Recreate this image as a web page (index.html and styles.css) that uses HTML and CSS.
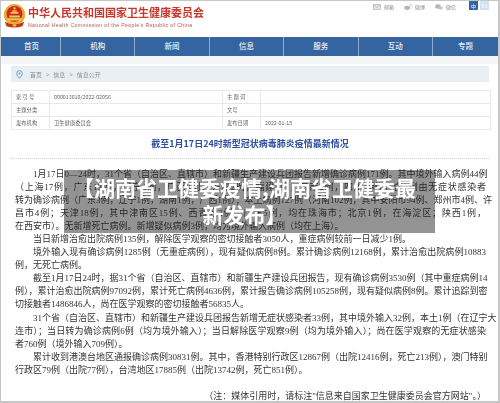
FILE: index.html
```html
<!DOCTYPE html>
<html lang="zh-CN">
<head>
  <meta charset="UTF-8" />
  <title>截至1月17日24时新型冠状病毒肺炎疫情最新情况</title>
  <link rel="stylesheet" href="styles.css">
</head>
<body>
  <div class="frame">
    <div class="page">
      <div class="masthead">
        <div class="brand">
          <svg class="emblem" viewBox="0 0 26 28" width="23" height="25">
            <circle cx="13" cy="12" r="12" fill="#e3ad32"/>
            <circle cx="13" cy="11" r="9" fill="#cf2a1c"/>
            <path d="M7 13h12v2H7zM8.500 9h9v2h-9zM10.500 7h5v1.500h-5z" fill="#f0c75a"/>
            <circle cx="13" cy="4.800" r="1.300" fill="#f6d96b"/>
            <rect x="5" y="16" width="16" height="2.500" fill="#f0c75a"/>
            <path d="M2 20q11 6 22 0l-2 5q-9 3-18 0z" fill="#c9301e"/>
            <circle cx="13" cy="24" r="2" fill="#e3ad32"/>
          </svg>
          <div>
            <div class="brand-cn">中华人民共和国国家卫生健康委员会</div>
            <div class="brand-en">National Health Commission of the People's Republic of China</div>
          </div>
        </div>
        <div class="tools">
          <span class="tool">
            <svg viewBox="0 0 8 6" width="8" height="6"><rect x="0.500" y="0.500" width="7" height="5" fill="#e6e6e6" stroke="#aaa" stroke-width="0.600"/><path d="M0.500 1l3.500 2.500L7.500 1" fill="none" stroke="#aaa" stroke-width="0.600"/></svg>
            邮箱
          </span>
          <span class="tool">
            <svg viewBox="0 0 8 6" width="8" height="6"><ellipse cx="3.200" cy="3.800" rx="3" ry="2.100" fill="#b5b5b5"/><path d="M5.500 .6q2 0 2 2" fill="none" stroke="#b5b5b5" stroke-width="0.800"/></svg>
            微博
          </span>
          <span class="tool">
            <svg viewBox="0 0 8 6" width="8" height="6"><ellipse cx="3" cy="2.500" rx="2.800" ry="2.200" fill="#b5b5b5"/><ellipse cx="5.700" cy="4" rx="2.200" ry="1.800" fill="#c8c8c8"/></svg>
            微信
          </span>
          <span class="lang lang-on">中</span>
          <span class="lang">En</span>
        </div>
      </div>

      <nav class="nav">
        <a>首页</a><a>机构</a><a>新闻</a><a>信息</a><a>服务</a><a>互动</a><a>专题</a>
      </nav>
      <div class="strip"></div>

      <div class="content">
        <div class="crumbs">
          <svg viewBox="0 0 8 10" width="7" height="9"><path d="M4 .6a3.200 3.200 0 0 1 3.200 3.200C7.200 6 4 9.400 4 9.400S.8 6 .8 3.800A3.200 3.200 0 0 1 4 .6z" fill="none" stroke="#5b93c9"/><circle cx="4" cy="3.800" r="1" fill="#5b93c9"/></svg>
          <span>首页</span><span class="sep">&gt;</span><span>信息</span><span class="sep">&gt;</span><span>信息公开</span>
        </div>

        <table class="meta">
          <tr><td class="k">索 引 号</td><td class="v1">000013610/2022-02056</td><td class="k">主 题 词</td><td></td></tr>
          <tr><td class="k">主题分类</td><td></td><td class="k">文号</td><td></td></tr>
          <tr><td class="k">发布机构</td><td>卫生健康委员会</td><td class="k">发布日期</td><td>2022-01-18</td></tr>
        </table>

        <h1 class="title">截至1月17日24时新型冠状病毒肺炎疫情最新情况</h1>

        <div class="article">
          <p>
            <span class="ln first">1月17日0—24时，31个省（自治区、直辖市）和新疆生产建设兵团报告新增确诊病例171例。其中境外输入病例44例</span>
            <span class="ln">（上海17例，广东13例，辽宁4例，广西3例，天津2例，福建2例，云南2例，四川1例），含7例由无症状感染者</span>
            <span class="ln">转为确诊病例（广东3例，辽宁1例，湖南1例，广西1例）；本土病例127例（河南102例，其中安阳市94例、郑州市4例、许</span>
            <span class="ln">昌市4例；天津18例，其中津南区15例、西青区2例；广东5例，均在珠海市；北京1例，在海淀区；陕西1例，</span>
            <span class="ln end">在西安市）。无新增死亡病例。新增疑似病例3例，均为境外输入病例（均在上海）。</span>
          </p>
          <p>
            <span class="ln first end">当日新增治愈出院病例135例，解除医学观察的密切接触者3050人，重症病例较前一日减少1例。</span>
          </p>
          <p>
            <span class="ln first">境外输入现有确诊病例1285例（无重症病例），现有疑似病例8例。累计确诊病例12168例，累计治愈出院病例10883</span>
            <span class="ln end">例，无死亡病例。</span>
          </p>
          <p>
            <span class="ln first">截至1月17日24时，据31个省（自治区、直辖市）和新疆生产建设兵团报告，现有确诊病例3530例（其中重症病例14</span>
            <span class="ln">例），累计治愈出院病例97092例，累计死亡病例4636例，累计报告确诊病例105258例，现有疑似病例8例。累计追踪到密</span>
            <span class="ln end">切接触者1486846人，尚在医学观察的密切接触者56835人。</span>
          </p>
          <p>
            <span class="ln first">31个省（自治区、直辖市）和新疆生产建设兵团报告新增无症状感染者33例，其中境外输入32例，本土1例（在辽宁大</span>
            <span class="ln">连市）；当日转为确诊病例6例（均为境外输入）；当日解除医学观察9例（均为境外输入）；尚在医学观察的无症状感染</span>
            <span class="ln end">者760例（境外输入709例）。</span>
          </p>
          <p>
            <span class="ln first">累计收到港澳台地区通报确诊病例30831例。其中，香港特别行政区12867例（出院12416例，死亡213例），澳门特别</span>
            <span class="ln end">行政区79例（出院77例），台湾地区17885例（出院13742例，死亡851例）。</span>
          </p>
          <p class="note">（注：媒体引用时，请标注"信息来自国家卫生健康委员会官方网站"。）</p>
        </div>
      </div>
    </div>
  </div>

  <div class="overlay">【湖南省卫健委疫情,湖南省卫健委最新发布】</div>
</body>
</html>
```

FILE: styles.css
```css
* {
  margin: 0;
  padding: 0;
  box-sizing: border-box;
}

body {
  width: 500px;
  height: 403px;
  overflow: hidden;
  background: #fff;
  font-family: "Liberation Serif", "Noto Sans CJK SC", serif;
  position: relative;
}

.frame {
  height: 403px;
  border: 1px solid #c6c6c6;
  border-right-width: 2px;
  border-bottom-width: 2px;
  overflow: hidden;
}

.page {
  filter: blur(0.35px);
}

.masthead {
  height: 36px;
  display: flex;
  justify-content: space-between;
  padding: 0 9px 0 2px;
}

.brand {
  display: flex;
  gap: 2px;
  padding-top: 3px;
}

.brand-cn {
  font-family: "Noto Sans CJK SC", sans-serif;
  font-weight: 700;
  font-size: 11px;
  line-height: 15px;
  color: #c8372b;
  margin-top: 1px;
}

.brand-en {
  font-family: "Liberation Sans", sans-serif;
  font-size: 5.200px;
  line-height: 8px;
  color: #b8564c;
  letter-spacing: 0.350px;
  margin-top: 1px;
  white-space: nowrap;
}

.tools {
  display: flex;
  align-items: flex-start;
  gap: 10px;
  font-family: "Noto Sans CJK SC", sans-serif;
  font-size: 5px;
  color: #888;
}

.tool {
  display: flex;
  align-items: center;
  gap: 3px;
  height: 9px;
  margin-top: 1px;
}

.lang {
  width: 9px;
  height: 9px;
  margin-left: -8px;
  background: #d5e2f0;
  color: #f2f6fa;
  text-align: center;
  line-height: 9px;
}

.lang-on {
  margin-left: 3px;
  background: #3565a0;
  color: #fff;
}

.nav {
  height: 19px;
  display: flex;
  background: #3565a0;
  padding-left: 59px;
  position: relative;
}

.nav a {
  width: 74.400px;
  border-left: 1px solid #8fabcc;
  color: #e8eef6;
  font-family: "Noto Sans CJK SC", sans-serif;
  font-weight: 500;
  font-size: 7.500px;
  line-height: 18px;
  text-align: center;
}

.nav a:first-child {
  position: absolute;
  left: 0;
  width: 60px;
  border-left: 0;
  padding-left: 1px;
}

.nav a:last-child {
  width: 66px;
}

.strip {
  height: 8px;
  background: #f3f5f7;
}

.content {
  padding: 2px 9px 0 10px;
}

.crumbs {
  height: 16px;
  background: #e9eef3;
  display: flex;
  align-items: center;
  gap: 4px;
  padding-left: 5px;
  font-family: "Noto Sans CJK SC", sans-serif;
  font-size: 6px;
  color: #8a8f96;
}

.crumbs svg {
  margin-right: 3px;
}

.meta {
  width: 480px;
  margin-top: 8px;
  border-collapse: collapse;
  table-layout: fixed;
  font-family: "Noto Sans CJK SC", sans-serif;
  font-size: 5.300px;
  color: #666;
}

.meta td {
  height: 13px;
  border: 1px solid #e8e8e8;
  padding: 0 4px;
  white-space: nowrap;
}

.meta td:nth-child(1) { width: 38px; }
.meta td:nth-child(2) { width: 173px; }
.meta td:nth-child(3) { width: 38px; }

.title {
  height: 29px;
  padding-top: 7px;
  border-bottom: 1px dotted #d0d0d0;
  font-family: "Noto Sans CJK SC", sans-serif;
  font-weight: 700;
  font-size: 9px;
  line-height: 14px;
  color: #2f4f9e;
  text-align: center;
}

.article {
  padding: 9px 3px 0 4px;
  font-size: 9px;
  line-height: 13.050px;
  color: #333;
}

.ln {
  display: block;
  white-space: nowrap;
  text-align: justify;
  text-align-last: justify;
}

.ln.first {
  padding-left: 18px;
}

.ln.end {
  text-align-last: left;
}

.article p.note {
  margin-top: 13px;
  text-align: right;
}

.overlay {
  position: absolute;
  left: 64px;
  top: 170px;
  width: 371px;
  height: 63px;
  padding: 4px 10px 0 0;
  background: rgba(30, 30, 30, 0.48);
  color: #fff;
  font-family: "Noto Sans CJK SC", sans-serif;
  font-weight: 700;
  font-size: 21px;
  line-height: 27px;
  text-align: center;
}
```
